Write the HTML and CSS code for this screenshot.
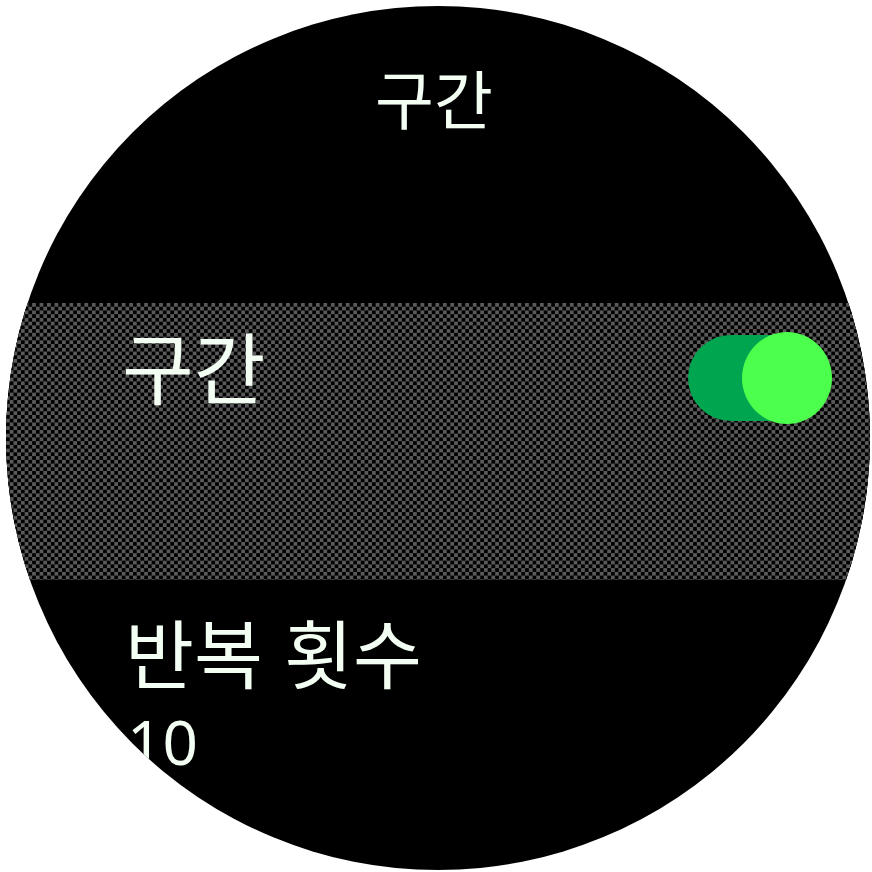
FILE: index.html
```html
<!DOCTYPE html>
<html lang="ko">
<head>
<meta charset="utf-8">
<link rel="stylesheet" href="styles.css">
</head>
<body>
<div class="watch">
  <div class="header">구간</div>
  <div class="band">
    <div class="row-title">구간</div>
    <div class="toggle">
      <div class="track"></div>
      <div class="knob"></div>
    </div>
  </div>
  <div class="item">
    <div class="item-title">반복 횟수</div>
    <div class="item-value">10</div>
  </div>
</div>
</body>
</html>
```

FILE: styles.css
```css
html, body {
  margin: 0;
  padding: 0;
  background: #ffffff;
}
body {
  width: 872px;
  height: 872px;
  overflow: hidden;
  font-family: "Noto Sans CJK KR", "Noto Sans", sans-serif;
  color: #f4fff4;
}
.watch {
  width: 864px;
  height: 864px;
  margin: 6px 0 0 6px;
  border-radius: 50%;
  background: #000;
  overflow: hidden;
  display: flex;
  flex-direction: column;
}
.header {
  height: 297px;
  box-sizing: border-box;
  padding-top: 58px;
  text-align: center;
  font-size: 64px;
  line-height: 64px;
  font-weight: 400;
  padding-right: 8px;
}
.band {
  height: 277px;
  flex: none;
  background-color: #000;
  background-image: conic-gradient(#5a5a5a 25%, #000 0 50%, #5a5a5a 0 75%, #000 0);
  background-size: 7.48px 7.48px;
  display: flex;
  justify-content: space-between;
  align-items: flex-start;
  padding: 0 38px 0 116px;
}
.row-title {
  font-size: 78px;
  line-height: 80px;
  margin-top: 22px;
}
.toggle {
  position: relative;
  width: 144px;
  height: 92px;
  margin-top: 29px;
}
.track {
  position: absolute;
  left: 0;
  top: 3px;
  width: 130px;
  height: 86px;
  border-radius: 43px;
  background: #00a550;
}
.knob {
  position: absolute;
  right: 0;
  top: 0;
  width: 90px;
  height: 92px;
  border-radius: 50%;
  background: #4dff4d;
}
.item {
  padding-left: 119px;
}
.item-title {
  font-size: 75px;
  line-height: 76px;
  margin-top: 33px;
  white-space: nowrap;
}
.item-value {
  font-family: "Noto Sans", sans-serif;
  font-size: 62px;
  line-height: 64px;
  margin-top: 20px;
  padding-left: 2px;
}
```
